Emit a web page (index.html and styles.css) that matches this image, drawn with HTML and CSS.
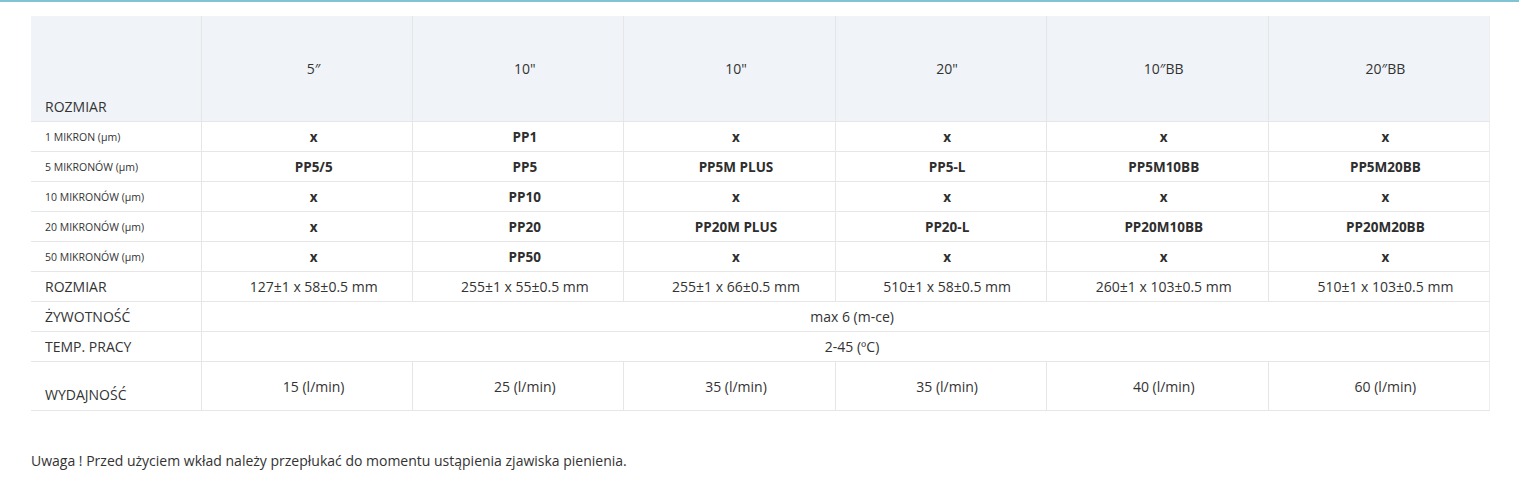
FILE: index.html
```html
<!DOCTYPE html>
<html lang="pl">
<head>
<meta charset="utf-8">
<title>Wkłady PP</title>
<link rel="stylesheet" href="styles.css">
</head>
<body>
<div class="topline"></div>
<div class="content">
  <table class="spec">
    <colgroup>
      <col class="c0"><col class="c1"><col class="c1"><col class="c1"><col class="c1"><col class="c5"><col class="c6">
    </colgroup>
    <thead>
      <tr class="head">
        <th class="lbl bottom">ROZMIAR</th>
        <th>5″</th>
        <th>10"</th>
        <th>10"</th>
        <th>20"</th>
        <th>10″BB</th>
        <th>20″BB</th>
      </tr>
    </thead>
    <tbody>
      <tr>
        <td class="lbl small">1 MIKRON (µm)</td>
        <td class="b">x</td><td class="b">PP1</td><td class="b">x</td><td class="b">x</td><td class="b">x</td><td class="b">x</td>
      </tr>
      <tr>
        <td class="lbl small">5 MIKRONÓW (µm)</td>
        <td class="b">PP5/5</td><td class="b">PP5</td><td class="b">PP5M PLUS</td><td class="b">PP5-L</td><td class="b">PP5M10BB</td><td class="b">PP5M20BB</td>
      </tr>
      <tr>
        <td class="lbl small">10 MIKRONÓW (µm)</td>
        <td class="b">x</td><td class="b">PP10</td><td class="b">x</td><td class="b">x</td><td class="b">x</td><td class="b">x</td>
      </tr>
      <tr>
        <td class="lbl small">20 MIKRONÓW (µm)</td>
        <td class="b">x</td><td class="b">PP20</td><td class="b">PP20M PLUS</td><td class="b">PP20-L</td><td class="b">PP20M10BB</td><td class="b">PP20M20BB</td>
      </tr>
      <tr>
        <td class="lbl small">50 MIKRONÓW (µm)</td>
        <td class="b">x</td><td class="b">PP50</td><td class="b">x</td><td class="b">x</td><td class="b">x</td><td class="b">x</td>
      </tr>
      <tr>
        <td class="lbl">ROZMIAR</td>
        <td>127±1 x 58±0.5 mm</td><td>255±1 x 55±0.5 mm</td><td>255±1 x 66±0.5 mm</td><td>510±1 x 58±0.5 mm</td><td>260±1 x 103±0.5 mm</td><td>510±1 x 103±0.5 mm</td>
      </tr>
      <tr>
        <td class="lbl">ŻYWOTNOŚĆ</td>
        <td colspan="6">max 6 (m-ce)</td>
      </tr>
      <tr>
        <td class="lbl">TEMP. PRACY</td>
        <td colspan="6">2-45 (ºC)</td>
      </tr>
      <tr class="tall">
        <td class="lbl bottom">WYDAJNOŚĆ</td>
        <td>15 (l/min)</td><td>25 (l/min)</td><td>35 (l/min)</td><td>35 (l/min)</td><td>40 (l/min)</td><td>60 (l/min)</td>
      </tr>
    </tbody>
  </table>
  <p class="note">Uwaga ! Przed użyciem wkład należy przepłukać do momentu ustąpienia zjawiska pienienia.</p>
</div>
</body>
</html>
```

FILE: styles.css
```css
html, body {
  margin: 0;
  padding: 0;
  background: #ffffff;
}
body {
  font-family: "Open Sans", "Noto Sans", sans-serif;
  color: #333333;
  font-size: 14px;
}
.topline {
  height: 2px;
  background: #80c4d3;
}
.content {
  padding: 14px 29px 0 31px;
}
.spec {
  width: 1459px;
  table-layout: fixed;
  border-collapse: separate;
  border-spacing: 0;
}
.c0 { width: 170px; }
.c1 { width: 211px; }
.c5 { width: 222px; }
.c6 { width: 222px; }
.spec th,
.spec td {
  box-sizing: border-box;
  height: 30px;
  padding: 0 1px 0 14px;
  border-bottom: 1px solid #e6e6e6;
  border-left: 1px solid #e6e6e6;
  text-align: center;
  vertical-align: middle;
  font-weight: 400;
  font-size: 14px;
  white-space: nowrap;
}
.spec th:last-child,
.spec td:last-child {
  border-right: 1px solid #eeeeee;
}
.spec th.lbl,
.spec td.lbl {
  border-left: none;
  text-align: left;
  font-size: 14px;
}
.spec td.small {
  font-size: 10.5px;
}
.head th {
  height: 106px;
  background: #f0f3f8;
  font-size: 14px;
}
.spec .bottom {
  vertical-align: bottom;
  padding-bottom: 5px;
}
.tall td {
  height: 49px;
}
.tall td.bottom {
  padding-bottom: 6px;
}
.spec td.b {
  font-weight: 700;
  font-size: 13.5px;
  color: #2e2e2e;
}
.note {
  margin: 40px 0 0 0;
  font-size: 14px;
  line-height: 20px;
}
```
